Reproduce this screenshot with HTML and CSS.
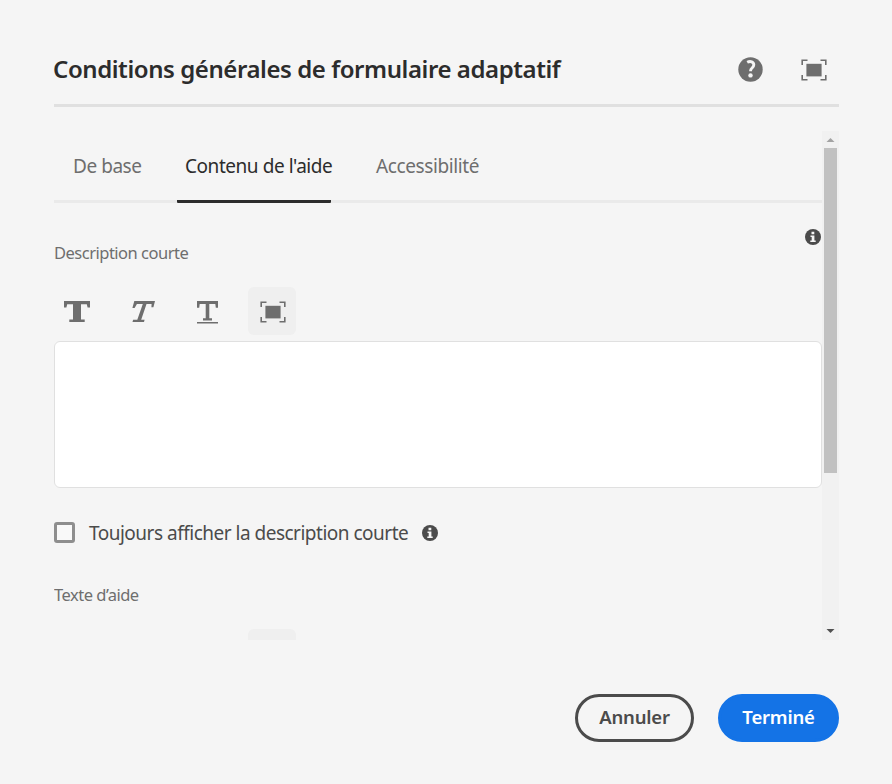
FILE: index.html
```html
<!DOCTYPE html>
<html lang="fr">
<head>
<meta charset="utf-8">
<title>Conditions générales de formulaire adaptatif</title>
<link rel="stylesheet" href="styles.css">
</head>
<body>
<svg class="defs" width="0" height="0">
  <symbol id="full" viewBox="0 0 26 22">
    <path d="M1.200 6V1.200H6.500M19.500 1.200H24.800V6M1.200 16v4.800H6.500M19.500 20.800H24.800V16" fill="none" stroke="currentColor" stroke-width="1.600"/>
    <path d="M5.400 4.800h15.200v12.600H5.400z" fill="currentColor"/>
  </symbol>
  <symbol id="info" viewBox="0 0 16 16">
    <circle cx="8" cy="8" r="8" fill="currentColor"/>
    <path d="M6.500 2.800h2.800v2.400H6.500zM5.500 6.500h3.900v5h1.300v1.500H5.300v-1.500h1.400V8.100H5.500z" fill="#f5f5f5"/>
  </symbol>
</svg>
<main class="dialog">
  <header class="header">
    <h1 class="title">Conditions générales de formulaire adaptatif</h1>
    <svg class="help" viewBox="0 0 26 26"><circle cx="12.500" cy="13.500" r="12.200" fill="currentColor"/><path d="M9.200 6.300C12.500 4.500 15.800 5.900 15.800 8.800c0 3.100-3.200 3.200-3.200 5.800v.7" fill="none" stroke="#f5f5f5" stroke-width="2.900"/><circle cx="12.500" cy="19.400" r="2.200" fill="#f5f5f5"/></svg>
    <svg class="full"><use href="#full"/></svg>
  </header>
  <div class="viewport">
    <div class="content">
      <nav class="tabs">
        <a class="tab base">De base</a>
        <a class="tab active">Contenu de l'aide</a>
        <a class="tab access">Accessibilité</a>
      </nav>
      <div class="field-head">
        <label class="label desc">Description courte</label>
        <svg class="info"><use href="#info"/></svg>
      </div>
      <div class="toolbar">
        <button class="tool"><svg viewBox="0 0 48 48"><path d="M11 14h26v6.500h-2.400l-.8-3.200H28V32.500h3.700V35H16.300v-2.500H20V17.300h-5.800L13.400 20.500H11z" fill="currentColor"/></svg></button>
        <button class="tool"><svg viewBox="0 0 48 48"><path d="M16.300 14H37l-1.600 6.200h-2l.2-3.200h-5.100L23.200 32.800h3.400L26 35h-11.500l.6-2.200h4.200L24.800 17h-5.900L16.600 21h-2.200z" fill="currentColor"/></svg></button>
        <button class="tool"><svg viewBox="0 0 48 48"><path d="M14 14h21v6.700h-2.200l-.5-3.600h-6V31.300H29V33.500h-9V31.300h2.700V17.100h-6l-.5 3.600H14zM14 35h21v1.600H14z" fill="currentColor"/></svg></button>
        <button class="tool boxed"><svg class="full"><use href="#full"/></svg></button>
      </div>
      <div class="editor" contenteditable="true"></div>
      <div class="check-row">
        <span class="check"></span>
        <span class="check-label">Toujours afficher la description courte</span>
        <svg class="info"><use href="#info"/></svg>
      </div>
      <label class="label help-text">Texte d’aide</label>
      <div class="toolbar second">
        <span class="tool"></span><span class="tool"></span><span class="tool"></span><span class="tool boxed"></span>
      </div>
    </div>
    <div class="scrollbar">
      <svg class="up" viewBox="0 0 17 17"><path d="M4.500 11l4-4 4 4z" fill="#a3a3a3"/></svg>
      <div class="thumb"></div>
      <svg class="down" viewBox="0 0 17 17"><path d="M4.500 6l4 4 4-4z" fill="#505050"/></svg>
    </div>
  </div>
  <footer class="footer">
    <button class="btn cancel">Annuler</button>
    <button class="btn done">Terminé</button>
  </footer>
</main>
</body>
</html>
```
FILE: styles.css
```css
* { box-sizing: border-box; }
body { margin: 0; background: #f5f5f5; font-family: "Noto Sans", sans-serif; color: #4b4b4b; overflow: hidden; }
svg { display: block; flex: none; }
.defs { position: absolute; }
.dialog { width: 892px; height: 784px; padding: 34px 53px 42px 54px; display: flex; flex-direction: column; }
.header { height: 73px; border-bottom: 3px solid #e0e0e0; display: flex; align-items: center; color: #6e6e6e; }
.title { margin: 0 0 0 -1px; flex: 1; font-size: 24px; line-height: 34px; font-weight: 600; letter-spacing: -0.43px; color: #2c2c2c; white-space: nowrap; }
.help { width: 26px; height: 26px; margin-right: 37px; }
.full { width: 26px; height: 22px; }
.header .full { margin: 1px 12px 0 0; }
.viewport { height: 509px; margin-top: 24px; display: flex; overflow: hidden; }
.content { width: 768px; flex: none; }
.tabs { height: 72px; border-bottom: 3px solid #eaeaea; display: flex; }
.tab { height: 72px; line-height: 70px; font-size: 19px; letter-spacing: -0.45px; color: #6e6e6e; white-space: nowrap; }
.base { width: 123px; padding-left: 19px; }
.active { width: 154px; padding-left: 8px; color: #2c2c2c; border-bottom: 3px solid #2c2c2c; border-radius: 1px; }
.access { padding-left: 45px; letter-spacing: -0.4px; }
.field-head { height: 84px; display: flex; justify-content: space-between; padding-top: 25px; }
.label { display: block; font-size: 16.5px; line-height: 24px; color: #6e6e6e; letter-spacing: -0.5px; white-space: nowrap; }
.desc { margin-top: 13px; }
.info { width: 16px; height: 16px; color: #4b4b4b; }
.field-head .info { margin-right: 1px; margin-top: 1px; }
.toolbar { display: flex; gap: 17px; height: 48px; margin-left: -1px; color: #6e6e6e; }
.tool { width: 48px; height: 48px; padding: 0; border: 0; border-radius: 6px; background: none; color: inherit; display: flex; align-items: center; justify-content: center; }
.tool > svg:not(.full) { width: 48px; height: 48px; }
.tool > .full { margin: 1px 0 0 1px; }
.boxed { background: #efefef; }
.editor { height: 147px; margin-top: 6px; background: #fff; border: 1px solid #e0e0e0; border-radius: 6px; }
.check-row { display: flex; align-items: center; height: 27px; margin-top: 31px; }
.check { width: 21px; height: 21px; border: 3px solid #8e8e8e; border-radius: 3px; background: #f9f9f9; margin-right: 14px; }
.check-label { width: 320px; font-size: 19px; letter-spacing: -0.5px; white-space: nowrap; margin-right: 13px; }
.help-text { margin-top: 37px; }
.second { margin-top: 22px; }
.scrollbar { width: 17px; height: 509px; background: #f1f1f1; display: flex; flex-direction: column; align-items: center; }
.scrollbar svg { width: 17px; height: 17px; }
.thumb { width: 13px; height: 325px; background: #c1c1c1; }
.down { margin-top: auto; }
.footer { display: flex; justify-content: flex-end; gap: 24px; margin-top: 54px; }
.btn { height: 48px; padding: 0 0 2px; border-radius: 24px; font: 600 18.5px/40px "Noto Sans", sans-serif; letter-spacing: -0.2px; }
.cancel { width: 119px; border: 3px solid #4b4b4b; background: none; color: #4b4b4b; }
.done { width: 121px; border: 3px solid #1473e6; background: #1473e6; color: #fff; }
```
